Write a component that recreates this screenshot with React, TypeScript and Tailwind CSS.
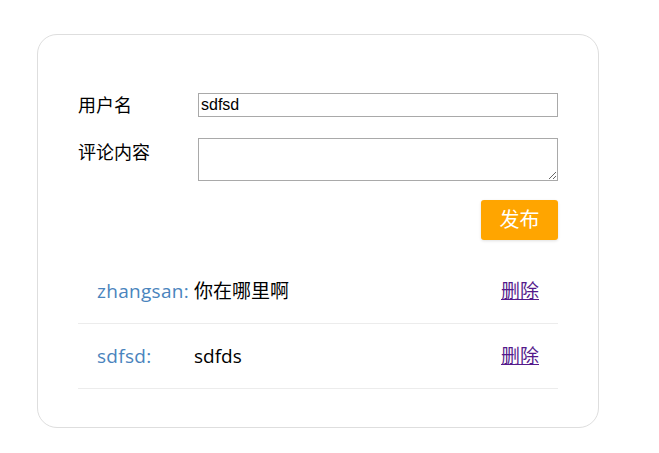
const comments = [
  { name: 'zhangsan:', content: '你在哪里啊' },
  { name: 'sdfsd:', content: 'sdfds' },
];

export default function App() {
  return (
    <div className="min-h-screen bg-white pl-[37px] pt-[34px] font-['Open_Sans','Noto_Sans_CJK_SC',sans-serif]">
      <div className="h-[394px] w-[562px] rounded-[20px] border border-[#dedede] px-10 pt-[58px]">
        {/* Form */}
        <div className="flex items-center">
          <label className="w-[120px] text-[18px] leading-6 text-black">用户名</label>
          <input
            defaultValue="sdfsd"
            className="h-[24px] w-[360px] border border-[#a9a9a9] px-[2px] font-['Liberation_Sans',sans-serif] text-[16px] text-black outline-none"
          />
        </div>
        <div className="mt-[21px] flex items-start">
          <label className="w-[120px] pt-[2px] text-[18px] leading-6 text-black">评论内容</label>
          <textarea className="h-[43px] w-[360px] border border-[#a9a9a9] text-[16px] outline-none" />
        </div>
        <div className="mt-[19px] flex justify-end">
          <button className="h-[40px] w-[77px] rounded-[3px] bg-[#ffa500] text-[20px] text-white shadow-[0_1px_3px_rgba(0,0,0,0.12)]">
            发布
          </button>
        </div>

        {/* Comment list */}
        <ul className="mt-[19px] w-[480px]">
          {comments.map((c) => (
            <li key={c.name} className="flex h-[65px] items-center border-b border-[#ececec] pl-[19px] pr-[19px] pt-[1px] text-[19px]">
              <span className="w-[97px] tracking-[0.3px] text-[#4a84bd]">{c.name}</span>
              <span className="flex-1 text-black">{c.content}</span>
              <a href="#" className="text-[#551a8b] underline">删除</a>
            </li>
          ))}
        </ul>
      </div>
    </div>
  );
}
